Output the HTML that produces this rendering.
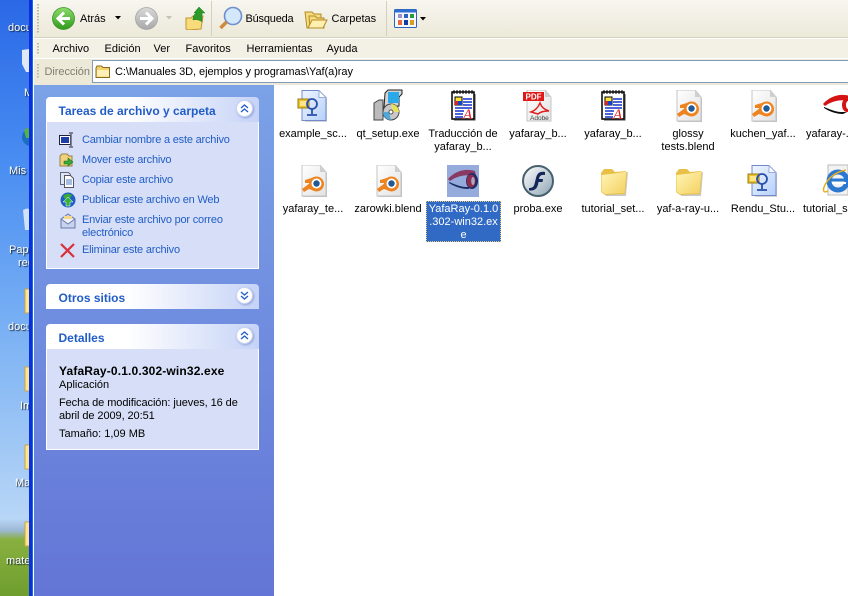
<!DOCTYPE html>
<html><head><meta charset="utf-8"><style>
html,body{margin:0;padding:0}
body{width:848px;height:596px;overflow:hidden;position:relative;background:#fff;font:11px/13px "Liberation Sans",sans-serif;color:#000}
div,svg{position:absolute}
.t{white-space:nowrap}
.w{color:#fff;text-shadow:1px 1px 1px #123}
.l{position:absolute;width:76px;text-align:center;line-height:13px;color:#000}
.lnk{position:absolute;left:82px;color:#215dc6;white-space:nowrap;line-height:13px;letter-spacing:-.2px}
.hd{position:absolute;left:46px;width:213px;height:25px;border-radius:4px 4px 0 0;background:linear-gradient(90deg,#fff 0%,#fff 38%,#c6d3f7 100%)}
.hd b{position:absolute;left:12.5px;top:8px;color:#215dc6;font-size:12px;line-height:13px;white-space:nowrap}
.body{position:absolute;left:46px;width:211px;background:#d6dff7;border:1px solid #fff;border-top:0}
.ch{position:absolute;left:190px;top:2.5px;width:15px;height:15px;border-radius:50%;background:#fff;border:1px solid #c9d4f0;box-shadow:1px 1px 2px #8ea0d8}
.ms{position:absolute;top:43px;line-height:13px;white-space:nowrap}
.g{position:absolute;left:37px;width:2px;background-image:linear-gradient(#bdb9a6 50%,transparent 50%);background-size:2px 3px}
</style></head><body>
<svg width="0" height="0" style="position:absolute"><defs>
<linearGradient id="fg" x1="0" y1="0" x2="1" y2="1"><stop offset="0" stop-color="#fff6b8"/><stop offset="1" stop-color="#f4d060"/></linearGradient>
<linearGradient id="pg" x1="0" y1="0" x2="1" y2="1"><stop offset="0" stop-color="#fff"/><stop offset="1" stop-color="#e2e2e2"/></linearGradient>
<linearGradient id="sg" x1="0" y1="0" x2="1" y2="1"><stop offset="0" stop-color="#f0f6ff"/><stop offset="1" stop-color="#b4d0fa"/></linearGradient>
<linearGradient id="gb" x1="0" y1="0" x2="0" y2="1"><stop offset="0" stop-color="#8edc6c"/><stop offset="1" stop-color="#2f9a1c"/></linearGradient>
<linearGradient id="gy" x1="0" y1="0" x2="0" y2="1"><stop offset="0" stop-color="#d8d8d8"/><stop offset="1" stop-color="#a8a8a8"/></linearGradient>
<linearGradient id="fl" x1="0" y1="0" x2="1" y2="1"><stop offset="0" stop-color="#fff"/><stop offset="1" stop-color="#8ea4b4"/></linearGradient>
<symbol id="blend" viewBox="0 0 32 32"><path d="M6 1h18l6 7v24H6z" fill="#999" opacity=".6"/><path d="M5 0h18l6 7v24H5z" fill="url(#pg)" stroke="#c4c4c4"/><path d="M23 0v7h6z" fill="#cfcfcf"/><path d="M5 24l8-6H8v-3l10-3v14l-6-2-5 3z" fill="#ee8420"/><circle cx="19.500" cy="19" r="7.500" fill="#ee8420"/><circle cx="19.500" cy="18.500" r="5" fill="#fff"/><circle cx="19.500" cy="18.500" r="3.200" fill="#1e5a96"/></symbol>
<symbol id="doc" viewBox="0 0 32 32"><path d="M5 3h22v27H5z" fill="#fff" stroke="#000" stroke-width="1.500"/><path d="M7 1v4M10 1v4M13 1v4M16 1v4M19 1v4M22 1v4M25 1v4" stroke="#000"/><path d="M28 5v26H7" fill="none" stroke="#444"/><path d="M8 8h7v8H8z" fill="#ffe23a" stroke="#000"/><path d="M8 12h3v4H8z" fill="#d22"/><path d="M11 12h4v4h-4z" fill="#14c"/><path d="M16 10h9M16 13h9M16 16h9M8 19h17M8 22h9M8 25h8M8 28h8" stroke="#1030c8" stroke-width="1.400"/><text x="16" y="30" font-family="Liberation Serif" font-style="italic" font-size="15" fill="#e01818">A</text></symbol>
<symbol id="script" viewBox="0 0 32 32"><path d="M6 2h16l8 7v23H8z" fill="#aaa" opacity=".5"/><path d="M5 0.500h17l7 7v23H5z" fill="url(#sg)" stroke="#7488cc"/><path d="M22 .500v7h7z" fill="#fff" stroke="#9aacdc"/><path d="M1 9h11v9H1z" fill="#f2c22c" stroke="#9a7c14"/><path d="M3 11h7v5H3z" fill="#fde68a"/><circle cx="15" cy="14" r="5" fill="none" stroke="#2a4fa8" stroke-width="1.800"/><path d="M15 19v5M10 25h10" stroke="#2a4fa8" stroke-width="1.800"/></symbol>
<symbol id="folder" viewBox="0 0 32 32"><path d="M7 10l24-2-2 24-20 0z" fill="#888" opacity=".45"/><path d="M4 9l3-4h8l3 3 11-1 1 2-2 21-20 1-4-3z" fill="#e8c048"/><path d="M4.500 11l13-1.500 12-2-2 21.500-19.500 1-3.500-2.500z" fill="url(#fg)"/></symbol>
</defs></svg>

<!-- desktop strip -->
<div style="left:0;top:0;width:29px;height:596px;background:linear-gradient(#2a68e6 0,#4a8ef2 28%,#7fb4f4 58%,#b8d6f6 87%,#9db8d4 89%,#88b040 90.500%,#6f9e2e 100%)"></div>
<svg style="left:0;top:0" width="29" height="596">
<path d="M22 50l7-1v23h-3l-4-8z" fill="#dfe9f6"/>
<circle cx="31" cy="137" r="9" fill="#1b6ec2"/><path d="M24 130q5-4 5 0v8h-3z" fill="#58b04a"/>
<path d="M23 210q6-3 6 0v20h-4z" fill="#cfe2f8"/>
<g fill="#ffe48a" stroke="#c9a74a"><path d="M25 289h5v24h-5z"/><path d="M25 367h5v24h-5z"/><path d="M25 445h5v24h-5z"/><path d="M25 522h5v24h-5z"/></g>
</svg>
<div class="t w" style="left:8px;top:22px">docu</div>
<div class="t w" style="left:24px;top:87px">M</div>
<div class="t w" style="left:9px;top:165px">Mis s</div>
<div class="t w" style="left:9px;top:244px">Pape</div>
<div class="t w" style="left:18px;top:257px">rec</div>
<div class="t w" style="left:8px;top:321px">docu</div>
<div class="t w" style="left:20px;top:400px">Im</div>
<div class="t w" style="left:15px;top:477px">Ma</div>
<div class="t w" style="left:6px;top:555px">mate</div>

<!-- window border -->
<div style="left:29px;top:0;width:4px;height:596px;background:linear-gradient(90deg,#0831d9 0,#0831d9 75%,#166aee 75%)"></div>
<div style="left:33px;top:0;width:1px;height:596px;background:#fff"></div>

<!-- toolbars -->
<div style="left:34px;top:0;width:814px;height:85px;background:#ece9d8"></div>
<div style="left:34px;top:0;width:814px;height:37px;background:linear-gradient(#f7f6f0,#ece9d8)"></div>
<div style="left:34px;top:37px;width:814px;height:1px;background:#d8d2bd"></div>
<div style="left:34px;top:38px;width:814px;height:20px;background:#f3f1e6"></div>
<div style="left:34px;top:38px;width:814px;height:1px;background:#fff"></div>
<div style="left:34px;top:58px;width:814px;height:1px;background:#fff"></div>
<div class="g" style="top:4px;height:29px"></div>
<div class="g" style="top:43px;height:12px"></div>
<div class="g" style="top:64px;height:15px"></div>

<svg style="left:52px;top:7px" width="23" height="23"><circle cx="11.500" cy="11.500" r="11" fill="url(#gb)" stroke="#3a9226" stroke-width=".8"/><path d="M18 11.500H7M12 5.500l-6 6 6 6" fill="none" stroke="#fff" stroke-width="3"/></svg>
<div class="t" style="left:80px;top:13px">Atrás</div>
<svg style="left:115px;top:16px" width="6" height="4"><path d="M0 0h6L3 3.500z"/></svg>
<svg style="left:135px;top:7px" width="23" height="23"><circle cx="11.500" cy="11.500" r="11" fill="url(#gy)" stroke="#a4a4a4" stroke-width=".8"/><path d="M5 11.500h11M11 5.500l6 6-6 6" fill="none" stroke="#fff" stroke-width="3"/></svg>
<svg style="left:166px;top:16px" width="6" height="4"><path d="M0 0h6L3 3.500z" fill="#c4c2b5"/></svg>
<svg style="left:185px;top:6px" width="21" height="24"><path d="M1 12h5l2-2h10l-2 13-13 1-2-1z" fill="#f8dc7c" stroke="#c2962c"/><path d="M8 14c0-4 1-6 4-7H9l5-6 6 6h-3v9c-2-2-6-3-9-2z" fill="#2c9a28" stroke="#1a7a1a" stroke-width=".5"/></svg>
<div style="left:211px;top:1px;width:1px;height:35px;background:#d4d0be"></div>
<svg style="left:218px;top:6px" width="26" height="25"><circle cx="15" cy="10" r="8.500" fill="#d4e8fb" stroke="#6f8fcc" stroke-width="1.600"/><path d="M8.500 16l-6 6" stroke="#d08a3c" stroke-width="3.500"/></svg>
<div class="t" style="left:245.500px;top:13px;letter-spacing:-.2px">Búsqueda</div>
<svg style="left:304px;top:9px" width="24" height="20"><path d="M1 3h7l2 2h7v14H3z" fill="#f6dc80" stroke="#b48a24"/><path d="M5 7h6l2 2h7v10H6z" fill="#f6dc80" stroke="#b48a24"/><path d="M4 19l4-8h15l-4 8z" fill="#fff0b0" stroke="#b48a24"/></svg>
<div class="t" style="left:331.500px;top:13px">Carpetas</div>
<div style="left:386px;top:1px;width:1px;height:35px;background:#d4d0be"></div>
<svg style="left:394px;top:9px" width="23" height="19"><rect x=".5" y=".5" width="22" height="18" rx="1" fill="#f5f8ff" stroke="#2f62b8"/><rect x=".5" y=".5" width="22" height="3" fill="#2f6fd0"/><path d="M4 5h4v4H4z" fill="#9a94c8"/><path d="M10 5h4v4h-4z" fill="#2f5fc0"/><path d="M16 5h4v4h-4z" fill="#2a9a3a"/><path d="M4 11h4v5H4z" fill="#e8683a"/><path d="M10 11h4v5h-4z" fill="#1c3a98"/><path d="M16 11h4v5h-4z" fill="#d8a020"/></svg>
<svg style="left:420px;top:17px" width="6" height="4"><path d="M0 0h6L3 3.500z"/></svg>

<div class="ms" style="left:52.500px">Archivo</div>
<div class="ms" style="left:104.500px">Edición</div>
<div class="ms" style="left:153.500px">Ver</div>
<div class="ms" style="left:185.500px">Favoritos</div>
<div class="ms" style="left:246.500px">Herramientas</div>
<div class="ms" style="left:326.500px">Ayuda</div>

<div class="t" style="left:44.500px;top:66px;color:#7f7d70;letter-spacing:-.05px">Dirección</div>
<div style="left:92px;top:60px;width:756px;height:23px;background:#fff;border:1px solid #7f9db9;border-right:0;box-sizing:border-box"></div>
<svg style="left:95px;top:64px" width="16" height="15" viewBox="0 0 32 30"><path d="M2 8l2-4h9l3 3h13v20H2z" fill="#f4d270" stroke="#8a6a1c" stroke-width="2"/><path d="M4 12h24v13H4z" fill="#fff0b8"/></svg>
<div class="t" style="left:115px;top:66px;letter-spacing:-.06px">C:\Manuales 3D, ejemplos y programas\Yaf(a)ray</div>

<!-- sidebar -->
<div style="left:34px;top:85px;width:240px;height:511px;background:linear-gradient(#7ba2e7,#6375d6)"></div>

<div class="hd" style="top:97px"><b>Tareas de archivo y carpeta</b><div class="ch"><svg style="left:3px;top:3px" width="9" height="9"><path d="M1 4l3.500-3L8 4M1 8l3.500-3L8 8" fill="none" stroke="#215dc6" stroke-width="1.300"/></svg></div></div>
<div class="body" style="top:122px;height:146px"></div>
<div class="lnk" style="top:134px">Cambiar nombre a este archivo</div>
<div class="lnk" style="top:154px">Mover este archivo</div>
<div class="lnk" style="top:174px">Copiar este archivo</div>
<div class="lnk" style="top:194px">Publicar este archivo en Web</div>
<div class="lnk" style="top:214px">Enviar este archivo por correo<br>electrónico</div>
<div class="lnk" style="top:244px">Eliminar este archivo</div>
<svg style="left:59px;top:132px" width="16" height="16"><rect x=".5" y="3.500" width="11" height="9" fill="#fff" stroke="#223"/><rect x="2" y="5" width="8" height="6" fill="#1f3fa8"/><path d="M12 1v14M10 1h4M10 15h4" stroke="#667" stroke-width="1.500"/></svg>
<svg style="left:59px;top:152px" width="16" height="16"><path d="M1 4l2-2h5l2 2h3v10H1z" fill="#f0d27c" stroke="#9a8040"/><path d="M5 9h4V6l5 4-5 4v-2H5z" fill="#3aa83a" stroke="#1a7a1a" stroke-width=".6"/></svg>
<svg style="left:60px;top:172px" width="15" height="16"><path d="M.5.500h8l2 2v10H.500z" fill="#dde6f8" stroke="#667"/><path d="M4.500 3.500h6l3 3v9h-9z" fill="#fff" stroke="#556"/><path d="M6 8h6M6 10h6M6 12h6" stroke="#4a78c8"/></svg>
<svg style="left:60px;top:192px" width="16" height="16"><circle cx="8" cy="8" r="7.500" fill="#1d5fc4"/><path d="M3 4q4-4 9-1l-2 3-5 1z" fill="#3aa83a"/><path d="M8 5l5 5h-3v4H6v-4H3z" fill="#38b038" stroke="#fff" stroke-width=".5"/></svg>
<svg style="left:60px;top:213px" width="16" height="16"><path d="M1 6l7-5 7 5v9H1z" fill="#c8d4ee" stroke="#6a78a8"/><path d="M4 3h8v6H4z" fill="#f4d88c"/><path d="M1 6l7 5 7-5" fill="#eef2fb" stroke="#6a78a8"/></svg>
<svg style="left:60px;top:243px" width="15" height="15"><path d="M1 1l13 13M14 1L1 14" stroke="#d8303c" stroke-width="2.200"/></svg>

<div class="hd" style="top:284px"><b>Otros sitios</b><div class="ch"><svg style="left:3px;top:3px" width="9" height="9"><path d="M1 1l3.500 3L8 1M1 5l3.500 3L8 5" fill="none" stroke="#215dc6" stroke-width="1.300"/></svg></div></div>

<div class="hd" style="top:324px"><b>Detalles</b><div class="ch"><svg style="left:3px;top:3px" width="9" height="9"><path d="M1 4l3.500-3L8 4M1 8l3.500-3L8 8" fill="none" stroke="#215dc6" stroke-width="1.300"/></svg></div></div>
<div class="body" style="top:349px;height:100px"></div>
<div class="t" style="left:59px;top:365px;font-weight:bold;font-size:12px;letter-spacing:.15px">YafaRay-0.1.0.302-win32.exe</div>
<div class="t" style="left:59px;top:379px">Aplicación</div>
<div class="t" style="left:59px;top:397px;letter-spacing:-.08px">Fecha de modificación: jueves, 16 de<br>abril de 2009, 20:51</div>
<div class="t" style="left:59px;top:428px">Tamaño: 1,09 MB</div>

<!-- files -->
<svg style="left:297px;top:90px" width="32" height="32"><use href="#script"/></svg>
<svg style="left:372px;top:89px" width="32" height="32"><path d="M13 4l3-3h14v4l-3 3v9l-15 2z" fill="#d4d4d4" stroke="#222"/><rect x="16" y="3" width="11" height="11" fill="#2aa8e8"/><path d="M2 14l5-3h4v20H2z" fill="#bbb" stroke="#444"/><circle cx="19" cy="23" r="8" fill="#c8c8c8" stroke="#444"/><path d="M19 15a8 8 0 0 1 8 8h-6z" fill="#e8e060"/><path d="M19 31a8 8 0 0 1-8-8h6z" fill="#50a8d8"/><circle cx="19" cy="23" r="2" fill="#fff" stroke="#555"/></svg>
<svg style="left:447px;top:89px" width="32" height="32"><use href="#doc"/></svg>
<svg style="left:522px;top:90px" width="32" height="32"><path d="M5 0h18l6 7v24H5z" fill="url(#pg)" stroke="#c4c4c4"/><path d="M23 0v7h6z" fill="#cfcfcf"/><rect x="1" y="2" width="21" height="9" fill="#e01818"/><text x="3.500" y="9.500" font-family="Liberation Sans" font-weight="bold" font-size="8" fill="#fff">PDF</text><path d="M9 22q6-2 9-9 2 6 9 8-8 0-11 3z" fill="none" stroke="#e02020" stroke-width="1.500"/><text x="8" y="30" font-family="Liberation Sans" font-size="6.500" fill="#444">Adobe</text></svg>
<svg style="left:597px;top:89px" width="32" height="32"><use href="#doc"/></svg>
<svg style="left:672px;top:90px" width="32" height="32"><use href="#blend"/></svg>
<svg style="left:747px;top:90px" width="32" height="32"><use href="#blend"/></svg>
<svg style="left:822px;top:90px" width="32" height="32"><path d="M1 14C8 6 18 3 28 6l1 5C18 9 10 11 3 16z" fill="#d41414"/><path d="M2 17c5 2 12 5 17 5l6 0-4 2c-6 0-13-2-19-6z" fill="#0c0c0c"/><ellipse cx="25" cy="15" rx="5" ry="7" fill="#d41414"/><ellipse cx="26" cy="15" rx="2" ry="4" fill="#fff"/></svg>

<svg style="left:297px;top:165px" width="32" height="32"><use href="#blend"/></svg>
<svg style="left:372px;top:165px" width="32" height="32"><use href="#blend"/></svg>
<div style="left:447px;top:165px;width:32px;height:32px;background:#94abdc"></div>
<svg style="left:447px;top:165px" width="32" height="32"><path d="M1 14C8 6 18 3 28 6l1 5C18 9 10 11 3 16z" fill="#8a3a62"/><path d="M2 17c5 2 12 5 17 5l6 0-4 2c-6 0-13-2-19-6z" fill="#1c2c64"/><ellipse cx="25" cy="16" rx="6" ry="8" fill="#1c2c64"/><ellipse cx="24" cy="16" rx="4.500" ry="6.500" fill="#8a2e50"/><ellipse cx="26" cy="16" rx="1.800" ry="4" fill="#b8a0c0"/></svg>
<svg style="left:522px;top:165px" width="32" height="32"><circle cx="16" cy="16" r="15" fill="url(#fl)" stroke="#46606e" stroke-width="2"/><path d="M23 7c-6-1-8 2-9 6l-1.500 6c-.6 3-2.500 4-5.500 4l0 2.500c5 .5 8-1.500 9-6l.5-2.500h4l.5-3h-4c.5-3 2-4.500 6-4z" fill="#14265a"/></svg>
<svg style="left:597px;top:164px" width="32" height="32"><use href="#folder"/></svg>
<svg style="left:672px;top:164px" width="32" height="32"><use href="#folder"/></svg>
<svg style="left:747px;top:165px" width="32" height="32"><use href="#script"/></svg>
<svg style="left:822px;top:164px" width="32" height="32"><path d="M6 1h20v30H6z" fill="#f2f2f2" stroke="#bbb"/><circle cx="16" cy="17" r="9" fill="none" stroke="#2a78d0" stroke-width="5"/><path d="M9 16h15" stroke="#2a78d0" stroke-width="3"/><path d="M24 19H10" stroke="#fff" stroke-width="2"/><path d="M6 27Q0 30 2 23 8 9 24 6" fill="none" stroke="#e8b020" stroke-width="1.500"/></svg>

<div class="l" style="left:275px;top:128px">example_sc...</div>
<div class="l" style="left:350px;top:128px">qt_setup.exe</div>
<div class="l" style="left:425px;top:128px">Traducción de<br>yafaray_b...</div>
<div class="l" style="left:500px;top:128px">yafaray_b...</div>
<div class="l" style="left:575px;top:128px">yafaray_b...</div>
<div class="l" style="left:650px;top:128px">glossy<br>tests.blend</div>
<div class="l" style="left:725px;top:128px">kuchen_yaf...</div>
<div class="l" style="left:800px;top:128px;white-space:nowrap;text-align:left;padding-left:6px">yafaray-...</div>

<div class="l" style="left:275px;top:203px">yafaray_te...</div>
<div class="l" style="left:350px;top:203px">zarowki.blend</div>
<div style="left:426px;top:201px;width:75px;height:41px;background:#316ac5;outline:1px dotted #e8c87a;outline-offset:-1px"></div>
<div class="l" style="left:425.500px;top:203px;color:#fff">YafaRay-0.1.0<br>.302-win32.ex<br>e</div>
<div class="l" style="left:500px;top:203px">proba.exe</div>
<div class="l" style="left:575px;top:203px">tutorial_set...</div>
<div class="l" style="left:650px;top:203px">yaf-a-ray-u...</div>
<div class="l" style="left:725px;top:203px">Rendu_Stu...</div>
<div class="l" style="left:800px;top:203px;white-space:nowrap;text-align:left;padding-left:3px">tutorial_s...</div>
</body></html>
